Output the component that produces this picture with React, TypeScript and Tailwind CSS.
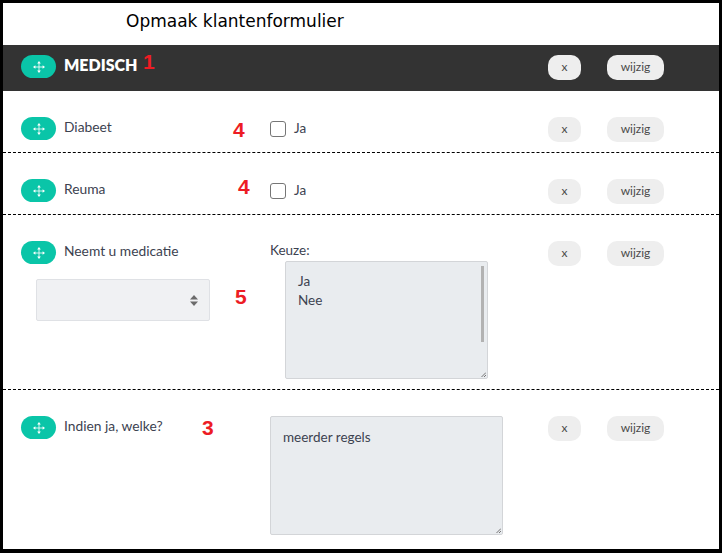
import type { ReactNode } from 'react';

const bodyFont = "font-['Lato','Noto_Sans',sans-serif]";

function DragHandle() {
  return (
    <span className="flex h-[23px] w-[35px] shrink-0 items-center justify-center rounded-[12px] bg-[#0ac5a8] text-white">
      <svg width="12" height="12" viewBox="0 0 12 12" fill="currentColor">
        <path d="M5.6 2h.8v8h-.8z" />
        <path d="M2 5.6h8v.8H2z" />
        <path d="M6 0 7.8 2.4H4.2Z" />
        <path d="M6 12 4.2 9.6h3.6Z" />
        <path d="M0 6 2.4 4.2v3.6Z" />
        <path d="M12 6 9.6 7.8V4.2Z" />
      </svg>
    </span>
  );
}

function Actions() {
  return (
    <div className="flex items-start gap-[26px] text-[12px] leading-[23px] text-[#4a4a4a]">
      <button className="h-[25px] w-[33px] rounded-[10px] bg-[#eeeeee] pb-[2px] text-center">x</button>
      <button className="h-[25px] w-[57px] rounded-[10px] bg-[#eeeeee] pb-[2px] text-center">wijzig</button>
    </div>
  );
}

function Marker({ className, children }: { className: string; children: ReactNode }) {
  return (
    <span className={`absolute font-['Liberation_Sans',sans-serif] text-[21px] leading-none font-bold text-[#ed1c24] ${className}`}>
      {children}
    </span>
  );
}

function ResizeGrip() {
  return (
    <svg className="absolute right-[2px] bottom-[2px]" width="5" height="5" viewBox="0 0 5 5" stroke="#555555" strokeWidth="0.8">
      <path d="M0.5 5 5 0.5" />
      <path d="M3 5 5 3" />
    </svg>
  );
}

function Row({ label, children, extra, className }: { label: string; children?: ReactNode; extra?: ReactNode; className: string }) {
  return (
    <div className={`relative grid grid-cols-[267px_278px_1fr] items-start border-b border-dashed border-black ${className}`}>
      <div>
        <div className="flex items-start gap-2 pl-[18px]">
          <DragHandle />
          <span className="text-[13.8px] leading-[19px] text-[#3c4250]">{label}</span>
        </div>
        {extra}
      </div>
      <div>{children}</div>
      <Actions />
    </div>
  );
}

function YesCheck() {
  return (
    <label className="flex h-[23px] items-center gap-2 text-[13.5px] text-[#3c4250]">
      <span className="h-4 w-4 rounded-[3px] border border-[#767676] bg-white" />
      Ja
    </label>
  );
}

export default function App() {
  return (
    <div className={`h-[553px] w-[722px] overflow-hidden border-x-[3px] border-t-[3px] border-b-[4px] border-black bg-white ${bodyFont}`}>
      {/* Title */}
      <div className="h-[42px] pt-[5px] pl-[123px] font-['DejaVu_Sans',sans-serif] text-[17px] leading-[26px] text-black">
        Opmaak klantenformulier
      </div>

      {/* Section header */}
      <div className="relative grid h-[46px] grid-cols-[267px_278px_1fr] items-start bg-[#333333] pt-[10px]">
        <div className="flex items-start gap-2 pl-[18px]">
          <DragHandle />
          <span className="text-[16px] leading-[20px] font-extrabold text-white">MEDISCH</span>
        </div>
        <div />
        <Actions />
        <Marker className="top-[6px] left-[140px]">1</Marker>
      </div>

      <Row label="Diabeet" className="h-[62px] pt-[26px]">
        <YesCheck />
        <Marker className="top-[28px] left-[230px]">4</Marker>
      </Row>

      <Row label="Reuma" className="h-[62px] pt-[26px]">
        <YesCheck />
        <Marker className="top-[23px] left-[235px]">4</Marker>
      </Row>

      <Row
        label="Neemt u medicatie"
        className="h-[175px] pt-[26px]"
        extra={
          <div className="relative mt-[15px] ml-[33px] h-[42px] w-[174px]">
            <select className="h-full w-full appearance-none rounded-[2px] border border-[#dfe1e5] bg-[#f0f1f3]" />
            <svg className="absolute top-[16px] right-[12px]" width="8" height="11" viewBox="0 0 8 11" fill="#6b6b6b">
              <path d="M4 0 8 4.5H0Z" />
              <path d="M4 11 0 6.5H8Z" />
            </svg>
          </div>
        }
      >
        <div className="text-[13.5px] leading-[19px] text-[#3c4250]">Keuze:</div>
        <div className="relative mt-[1px] ml-[15px] w-[203px]">
          <textarea
            readOnly
            className="block h-[118px] w-full resize-none rounded-[2px] border border-[#d3d5d8] bg-[#e9ecef] px-3 py-[10px] text-[13.5px] leading-[19px] text-[#3c4250] outline-none"
            value={'Ja\nNee'}
          />
          <span className="absolute top-[5px] right-[4px] h-[76px] w-[3px] bg-[#b2b2b2]" />
          <ResizeGrip />
        </div>
        <Marker className="top-[71px] left-[232px]">5</Marker>
      </Row>

      <div className="relative grid grid-cols-[267px_278px_1fr] items-start pt-[26px]">
        <div className="flex items-start gap-2 pl-[18px]">
          <DragHandle />
          <span className="text-[13.8px] leading-[19px] text-[#3c4250]">Indien ja, welke?</span>
        </div>
        <div className="relative w-[233px]">
          <textarea
            readOnly
            className="block h-[119px] w-full resize-none rounded-[2px] border border-[#d3d5d8] bg-[#e9ecef] px-3 py-[10px] text-[13.5px] leading-[20px] text-[#3c4250] outline-none"
            value="meerder regels"
          />
          <ResizeGrip />
        </div>
        <Actions />
        <Marker className="top-[27px] left-[199px]">3</Marker>
      </div>
    </div>
  );
}
